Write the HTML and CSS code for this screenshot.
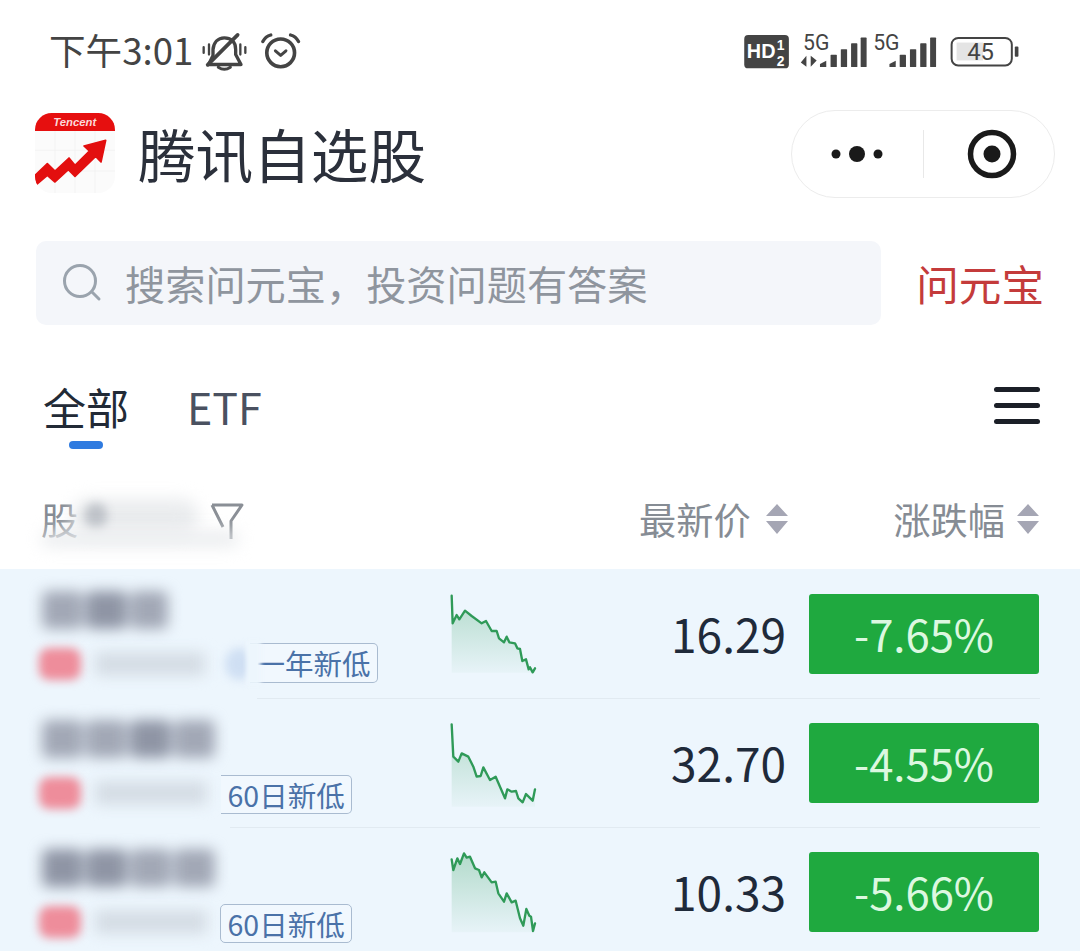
FILE: index.html
```html
<!DOCTYPE html>
<html lang="zh-CN">
<head>
<meta charset="utf-8">
<title>腾讯自选股</title>
<link rel="stylesheet" href="styles.css">
</head>
<body>
<div class="app">
  <div class="status">
    <span class="time">下午3:01</span>
    <svg class="ico-bell" viewBox="605 98 135 116" width="45" height="39" fill="none" stroke="#444" stroke-width="10" stroke-linecap="round" stroke-linejoin="round">
      <path d="M625 195 H722 L706 165 V150 C706 125 690 115 672 115 C652 115 640 130 638 150 V168 Z"/>
      <path d="M712 106 L622 196" stroke-width="11"/>
      <path d="M654 203 Q672 216 690 203" stroke-width="9"/>
      <path d="M610 143 V160 M626 135 V165 M720 135 V165 M735 143 V160" stroke-width="7"/>
    </svg>
    <svg class="ico-alarm" viewBox="783 98 120 112" width="40" height="37" fill="none" stroke="#444" stroke-linecap="round" stroke-linejoin="round">
      <circle cx="842" cy="158" r="42" stroke-width="11"/>
      <path d="M826 152 L842 166 L858 152" stroke-width="9"/>
      <path d="M788 124 Q796 108 812 104 M872 104 Q888 108 896 124" stroke-width="10"/>
    </svg>
    <svg class="ico-right" viewBox="60 60 850 130" width="283" height="43">
      <rect x="70" y="75" width="135" height="101" rx="12" fill="#444"/>
      <text x="78" y="146" class="t-hd">HD</text>
      <text x="168" y="120" class="t-hd-s">1</text>
      <text x="168" y="170" class="t-hd-s">2</text>
      <text x="248" y="119" class="t-5g">5G</text>
      <path d="M258 138 V171 L241 158 Z M271 138 V171 L289 152 Z" fill="#444"/>
      <path d="M299 172 V163 L318 153 V172 Z" fill="#444"/>
      <rect x="331" y="135" width="19" height="37" rx="2" fill="#444"/>
      <rect x="362" y="118" width="19" height="54" rx="2" fill="#444"/>
      <rect x="393" y="100" width="19" height="72" rx="2" fill="#444"/>
      <rect x="422" y="83" width="18" height="89" rx="2" fill="#444"/>
      <text x="460" y="119" class="t-5g">5G</text>
      <path d="M509 172 V163 L528 153 V172 Z" fill="#444"/>
      <rect x="540" y="135" width="19" height="37" rx="2" fill="#444"/>
      <rect x="571" y="118" width="19" height="54" rx="2" fill="#444"/>
      <rect x="602" y="100" width="19" height="72" rx="2" fill="#444"/>
      <rect x="632" y="83" width="18" height="89" rx="2" fill="#444"/>
      <rect x="712" y="98" width="80" height="54" fill="#e4e4e4"/>
      <rect x="697" y="84" width="182" height="83" rx="20" fill="none" stroke="#444" stroke-width="6"/>
      <text x="744" y="150" class="t-bat">45</text>
      <rect x="888" y="110" width="11" height="31" rx="3" fill="#444"/>
    </svg>
  </div>

  <div class="header">
    <svg class="logo" viewBox="105 338 240 240" width="80" height="80">
      <defs><clipPath id="lc"><rect x="105" y="338" width="240" height="240" rx="50"/></clipPath></defs>
      <g clip-path="url(#lc)">
        <rect x="105" y="338" width="240" height="240" fill="#fbfbfb"/>
        <path d="M165 392 V578 M225 392 V578 M285 392 V578 M105 450 H345 M105 512 H345" stroke="#f0f0f0" stroke-width="2"/>
        <rect x="105" y="338" width="240" height="54" fill="#e60f0f"/>
        <text x="224" y="377" class="t-tencent">Tencent</text>
        <path d="M105 525 L142 490 L165 512 L207 473 L225 495 L268 452 L252 437 L317 420 L303 485 L287 468 L225 528 L205 508 L165 545 L142 525 L110 552 Z" fill="#e30f0f" stroke="#e30f0f" stroke-width="5" stroke-linejoin="round"/>
      </g>
    </svg>
    <h1 class="title">腾讯自选股</h1>
    <div class="capsule">
      <svg class="cap-dots" viewBox="0 0 52 18" width="52" height="18" fill="#1a1a1a">
        <circle cx="5" cy="9" r="4.5"/><circle cx="26" cy="9" r="8"/><circle cx="47" cy="9" r="4.5"/>
      </svg>
      <span class="cap-sep"></span>
      <svg class="cap-target" viewBox="0 0 50 50" width="50" height="50">
        <circle cx="25" cy="25" r="21.5" fill="none" stroke="#1a1a1a" stroke-width="5.5"/>
        <circle cx="25" cy="25" r="8.5" fill="#1a1a1a"/>
      </svg>
    </div>
  </div>

  <div class="search-row">
    <div class="search">
      <svg class="search-ico" viewBox="0 0 40 40" width="40" height="40" fill="none" stroke="#9aa3ad" stroke-width="3" stroke-linecap="round">
        <circle cx="18" cy="18" r="15.5"/><path d="M30 29 L37 36"/>
      </svg>
      <span class="placeholder">搜索问元宝，投资问题有答案</span>
    </div>
    <span class="ask">问元宝</span>
  </div>

  <div class="tabs">
    <div class="tab tab-on">全部</div>
    <div class="tab">ETF</div>
    <div class="menu"><i></i><i></i><i></i></div>
  </div>

  <div class="thead">
    <div class="th-name">
      <span>股</span>
      <svg viewBox="0 0 34 38" width="34" height="38" fill="none" stroke="#8a8f96" stroke-width="3" stroke-linejoin="round"><path d="M2 2 H32 L21 18 V36 M13 24 L2 2"/></svg>
      <b class="smear"></b>
      <b class="smear-dark"></b>
      <b class="smear2"></b>
    </div>
    <div class="th-price">最新价<svg class="sort" viewBox="0 0 24 32" width="24" height="32" fill="#a5a6b4"><path d="M12 1 L23 13 H1 Z M1 18 H23 L12 31 Z"/></svg></div>
    <div class="th-pct">涨跌幅<svg class="sort" viewBox="0 0 24 32" width="24" height="32" fill="#a5a6b4"><path d="M12 1 L23 13 H1 Z M1 18 H23 L12 31 Z"/></svg></div>
  </div>

  <div class="rows">
    <div class="row row-1">
      <div class="info">
        <div class="name"><b class="w-a"></b><b class="w-a dark"></b><b class="w-b"></b></div>
        <div class="sub">
          <b class="pill"></b><b class="code c1"></b><b class="dot"></b>
          <span class="tag tag-cut tag-1">一年新低</span>
        </div>
      </div>
      <svg class="spark" viewBox="60 33 270 270" width="90" height="90">
        <defs><linearGradient id="g1" x1="0" y1="0" x2="0" y2="1"><stop offset="0" stop-color="#2a9a55" stop-opacity=".3"/><stop offset="1" stop-color="#2a9a55" stop-opacity=".03"/></linearGradient></defs>
        <path fill="url(#g1)" d="M65 47 L68 130 L80 105 L88 118 L105 92 L125 108 L155 130 L168 123 L185 153 L200 153 L207 175 L222 187 L230 170 L238 187 L255 190 L262 205 L270 207 L277 243 L288 238 L296 268 L300 262 L308 277 L315 265 V278 H65 Z"/>
        <path class="spark-line" d="M65 47 L68 130 L80 105 L88 118 L105 92 L125 108 L155 130 L168 123 L185 153 L200 153 L207 175 L222 187 L230 170 L238 187 L255 190 L262 205 L270 207 L277 243 L288 238 L296 268 L300 262 L308 277 L315 265"/>
      </svg>
      <div class="price">16.29</div>
      <div class="pct">-7.65%</div>
    </div>
    <div class="row row-2">
      <div class="info">
        <div class="name"><b class="w-c"></b><b class="w-c"></b><b class="w-c dark"></b><b class="w-c"></b></div>
        <div class="sub">
          <b class="pill"></b><b class="code c2"></b>
          <span class="tag tag-cut tag-2">60日新低</span>
        </div>
      </div>
      <svg class="spark" viewBox="60 420 270 270" width="90" height="90">
        <path fill="url(#g1)" d="M65 433 L70 530 L85 545 L95 520 L115 530 L130 560 L140 590 L152 588 L160 562 L180 600 L197 590 L225 655 L232 628 L245 635 L258 633 L265 655 L278 667 L288 642 L298 652 L308 662 L315 628 V680 H65 Z"/>
        <path class="spark-line" d="M65 433 L70 530 L85 545 L95 520 L115 530 L130 560 L140 590 L152 588 L160 562 L180 600 L197 590 L225 655 L232 628 L245 635 L258 633 L265 655 L278 667 L288 642 L298 652 L308 662 L315 628"/>
      </svg>
      <div class="price">32.70</div>
      <div class="pct">-4.55%</div>
    </div>
    <div class="row row-3">
      <div class="info">
        <div class="name"><b class="w-c dark"></b><b class="w-c dark"></b><b class="w-c"></b><b class="w-c"></b></div>
        <div class="sub">
          <b class="pill"></b><b class="code c3"></b>
          <span class="tag tag-3">60日新低</span>
        </div>
      </div>
      <svg class="spark" viewBox="60 807 270 270" width="90" height="90">
        <path fill="url(#g1)" d="M65 838 L70 870 L82 835 L90 852 L102 820 L110 833 L120 830 L135 865 L147 870 L155 892 L163 877 L185 907 L197 905 L205 940 L222 965 L230 940 L245 967 L257 962 L270 1015 L280 1037 L289 987 L298 1007 L303 1010 L309 1053 L315 1030 V1057 H65 Z"/>
        <path class="spark-line" d="M65 838 L70 870 L82 835 L90 852 L102 820 L110 833 L120 830 L135 865 L147 870 L155 892 L163 877 L185 907 L197 905 L205 940 L222 965 L230 940 L245 967 L257 962 L270 1015 L280 1037 L289 987 L298 1007 L303 1010 L309 1053 L315 1030"/>
      </svg>
      <div class="price">10.33</div>
      <div class="pct">-5.66%</div>
    </div>
  </div>
</div>
</body>
</html>
```

FILE: styles.css
```css
* { box-sizing: border-box; }
html, body { margin: 0; padding: 0; background: #fff; }
body {
  width: 1080px;
  height: 951px;
  overflow: hidden;
  font-family: "Noto Sans CJK SC", "Noto Sans", sans-serif;
}
.app { width: 1080px; }

/* status bar */
.status {
  height: 100px;
  padding: 0 0 0 49px;
  display: flex;
  align-items: center;
  color: #444;
}
.time { font-size: 36.6px; line-height: 44px; }
.ico-bell { margin-left: 9px; margin-top: 2px; }
.ico-alarm { margin-left: 14px; margin-top: 2px; }
.ico-right { margin-left: auto; margin-right: 57px; margin-top: 2px; }
.t-hd { font: 700 60px "Liberation Sans", sans-serif; fill: #fff; }
.t-hd-s { font: 700 42px "Liberation Sans", sans-serif; fill: #fff; }
.t-5g { font: 400 64px Roboto, sans-serif; fill: #444; }
.t-bat { font: 400 72px Roboto, sans-serif; fill: #444; }
.t-tencent { font: italic 700 34px "Liberation Sans", sans-serif; fill: #fbd9d9; text-anchor: middle; }

/* mini program header */
.header {
  height: 110px;
  padding-left: 35px;
  display: flex;
  align-items: center;
}
.logo { flex: none; margin-top: -5px; }
.title {
  margin: -4px 0 0 23px;
  font-size: 57.6px;
  font-weight: 400;
  line-height: 70px;
  color: #2b303b;
}
.capsule {
  margin-left: auto;
  margin-right: 25px;
  margin-top: -2px;
  width: 264px;
  height: 88px;
  border: 1px solid #ececec;
  border-radius: 44px;
  display: flex;
  align-items: center;
  padding-left: 39px;
}
.cap-sep { width: 1px; height: 48px; background: #e8e8e8; margin-left: 40px; }
.cap-target { margin-left: 43px; }

/* search */
.search-row {
  margin-top: 31px;
  padding: 0 36px;
  display: flex;
  align-items: center;
  justify-content: space-between;
}
.search {
  width: 845px;
  height: 84px;
  background: #f4f6fa;
  border-radius: 10px;
  display: flex;
  align-items: center;
  padding-left: 26px;
}
.placeholder { margin-left: 23px; font-size: 40.2px; line-height: 50px; color: #8f959e; }
.ask { font-size: 42.6px; line-height: 50px; color: #c43b3b; }

/* tabs */
.tabs {
  margin-top: 53px;
  height: 72px;
  padding: 0 40px 0 43px;
  display: flex;
  align-items: flex-start;
  gap: 58px;
}
.tab { position: relative; font-size: 43px; line-height: 56px; color: #4a5160; }
.tab-on { color: #222a36; }
.tab-on::after {
  content: "";
  position: absolute;
  left: 26px;
  top: 63px;
  width: 34px;
  height: 8px;
  border-radius: 4px;
  background: #2f7be0;
}
.menu { margin: 9px 0 0 auto; width: 46px; display: flex; flex-direction: column; gap: 11px; }
.menu i { display: block; height: 5px; border-radius: 2.5px; background: #1b1f27; }

/* table head */
.thead {
  margin-top: 44px;
  height: 54px;
  padding-left: 41px;
  padding-right: 40px;
  display: flex;
  align-items: center;
  font-size: 37.2px;
  color: #868c94;
  white-space: nowrap;
}
.th-name { position: relative; flex: none; width: 598px; display: flex; align-items: center; }
.th-name span { width: 169px; line-height: 44px; margin-top: -4px; }
.th-name svg { margin-top: 2px; }
.smear, .smear-dark, .smear2 { position: absolute; display: block; filter: blur(8px); }
.smear { left: 30px; top: -2px; width: 128px; height: 36px; background: #eaecee; border-radius: 20px; }
.smear-dark { left: 44px; top: 2px; width: 22px; height: 26px; background: #bfc3c9; border-radius: 12px; filter: blur(5px); }
.smear2 { left: 0; top: 30px; width: 198px; height: 16px; background: #ebedef; border-radius: 8px; }
.th-price { flex: none; width: 250px; display: flex; align-items: center; gap: 14px; margin-top: -4px; }
.th-pct { flex: none; margin-left: auto; display: flex; align-items: center; gap: 11px; margin-top: -4px; }
.sort { flex: none; }

/* rows */
.rows { margin-top: 21px; background: #edf6fd; }
.row {
  position: relative;
  height: 129px;
  padding-left: 40px;
  display: flex;
  align-items: flex-start;
}
.row::after {
  content: "";
  position: absolute;
  left: 40px;
  right: 40px;
  bottom: -1px;
  height: 1px;
  background: #e1eaf1;
}
.row-1::after { left: 257px; }
.row-2::after { left: 230px; }
.info { width: 410px; padding-top: 22px; }
.name { display: flex; gap: 3px; height: 40px; margin-left: 2px; filter: blur(7px); }
.name b { display: block; height: 38px; background: #a2a8b6; border-radius: 6px; }
.name .dark { background: #8f95a5; }
.w-a { width: 41px; }
.w-b { width: 38px; }
.w-c { width: 41px; }
.sub { position: relative; display: flex; align-items: center; height: 42px; margin-top: 12px; }
.pill { display: block; width: 42px; height: 32px; margin-left: -1px; border-radius: 10px; background: #ee8d9b; filter: blur(5px); flex: none; }
.code { display: block; height: 24px; margin-left: 14px; background: #d5dde5; filter: blur(7px); flex: none; }
.c1 { width: 110px; }
.c2 { width: 112px; }
.c3 { width: 112px; }
.dot { display: block; width: 28px; height: 32px; margin-left: 20px; border-radius: 50%; background: #cfdff3; filter: blur(5px); flex: none; }
.tag {
  position: absolute;
  top: 3px;
  height: 39px;
  padding: 0 6.5px;
  display: flex;
  align-items: center;
  font-size: 28.5px;
  line-height: 36px;
  color: #4a72a8;
  background: #f1f8fe;
  border: 1.5px solid #a9bbd0;
  border-radius: 5px;
  white-space: nowrap;
}
.tag-cut { border-left: 0; border-radius: 0 5px 5px 0; }
.tag-1 { left: 210px; top: 0; height: 40px; }
.tag-1::before {
  content: "";
  position: absolute;
  left: -4px;
  top: -3px;
  bottom: -3px;
  width: 15px;
  background: #edf6fd;
  filter: blur(2px);
}
.tag-2 { left: 181px; }
.tag-3 { left: 180px; }
.spark { flex: none; margin-top: 22px; display: block; }
.spark-line { fill: none; stroke: #2f9a58; stroke-width: 7; stroke-linejoin: round; stroke-linecap: round; }
.price {
  width: 246px;
  margin-top: 29px;
  text-align: right;
  font-size: 46px;
  line-height: 70px;
  color: #1f2a3a;
}
.pct {
  margin: 25px 0 0 23px;
  width: 230px;
  height: 80px;
  background: #1fa93f;
  border-radius: 3px;
  text-align: center;
  font-size: 43.6px;
  line-height: 78px;
  color: #dcf8e0;
}
```
